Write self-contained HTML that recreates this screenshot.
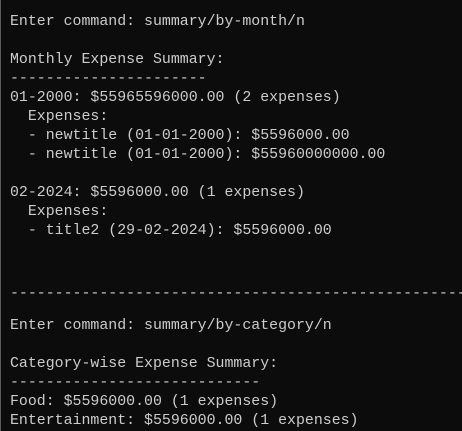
<!DOCTYPE html>
<html><head><style>
html,body{margin:0;padding:0;background:#0c0c0c;width:462px;height:431px;overflow:hidden}
body{position:relative;border-left:1px solid #5a5a5a;box-sizing:border-box}
.l{position:absolute;left:9px;font-family:"Liberation Mono",monospace;font-size:14.9px;color:#cccccc;white-space:pre;line-height:19px}
</style></head><body>
<div class="l" style="top:13px">Enter command: summary/by-month/n

Monthly Expense Summary:
----------------------
01-2000: $55965596000.00 (2 expenses)
  Expenses:
  - newtitle (01-01-2000): $5596000.00
  - newtitle (01-01-2000): $55960000000.00

02-2024: $5596000.00 (1 expenses)
  Expenses:
  - title2 (29-02-2024): $5596000.00</div>
<div class="l" style="top:285px;width:452px;overflow:hidden">----------------------------------------------------</div>
<div class="l" style="top:317px">Enter command: summary/by-category/n

Category-wise Expense Summary:
----------------------------
Food: $5596000.00 (1 expenses)
Entertainment: $5596000.00 (1 expenses)</div>
</body></html>
